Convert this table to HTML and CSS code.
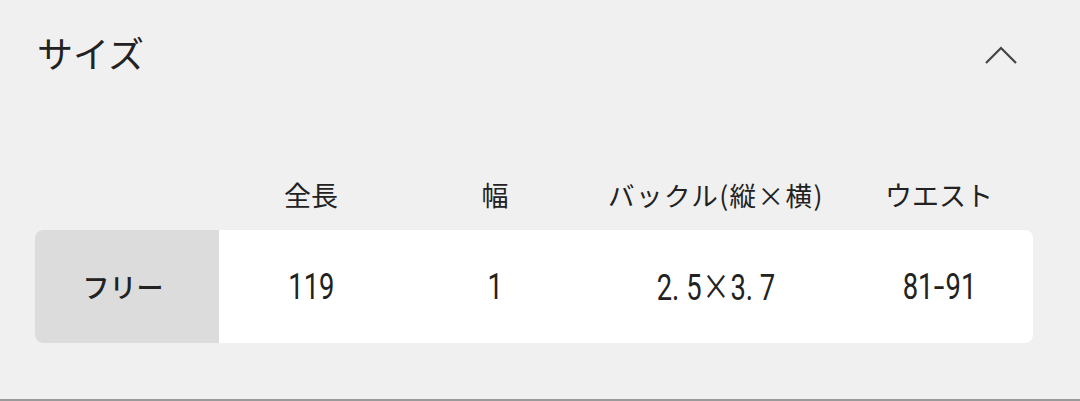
FILE: index.html
```html
<!DOCTYPE html>
<html lang="ja">
<head>
<meta charset="utf-8">
<link rel="stylesheet" href="styles.css">
</head>
<body>
<section class="panel">
  <header class="head">
    <h2 class="title">サイズ</h2>
    <svg class="chev" width="34" height="20" viewBox="0 0 34 20"><polyline points="2,18 17,3 32,18" fill="none" stroke="#444" stroke-width="2.2"/></svg>
  </header>
  <div class="table">
    <div class="row hrow">
      <div class="lab"></div>
      <div class="c">全長</div>
      <div class="c">幅</div>
      <div class="c wide">バックル(縦×横)</div>
      <div class="c">ウエスト</div>
    </div>
    <div class="row drow">
      <div class="lab">フリー</div>
      <div class="c"><span class="num">119</span></div>
      <div class="c"><span class="num">1</span></div>
      <div class="c"><span class="num">2.<span class="sp"> </span>5<span class="x">×</span>3.<span class="sp"> </span>7</span></div>
      <div class="c"><span class="num">81<span class="dash">-</span>91</span></div>
    </div>
  </div>
</section>
<div class="rule"></div>
</body>
</html>
```

FILE: styles.css
```css
html, body { margin: 0; padding: 0; }
body {
  width: 1080px;
  height: 401px;
  background: #f0f0f0;
  font-family: "Noto Sans CJK JP", "Noto Sans", sans-serif;
  color: #222;
  display: flex;
  flex-direction: column;
  overflow: hidden;
}
.panel { flex: 1; padding: 0 0 0 35px; }
.head {
  height: 108px;
  width: 983px;
  display: flex;
  align-items: center;
  justify-content: space-between;
}
.title {
  margin: 0 0 0 2px;
  font-size: 36px;
  font-weight: 400;
  line-height: 1;
  position: relative;
  top: -2px;
}
.chev { position: relative; top: 1px; }
.table { display: flex; flex-direction: column; }
.row {
  display: grid;
  grid-template-columns: 184px 184px 184px 258px 188px;
  width: 998px;
}
.hrow { height: 122px; align-items: center; font-size: 27px; }
.hrow .c { text-align: center; padding-top: 50px; }
.hrow .wide { letter-spacing: 1.5px; font-size: 26.5px; }
.drow {
  height: 113px;
  background: #fff;
  border-radius: 8px;
  overflow: hidden;
  align-items: stretch;
}
.drow .lab {
  background: #dcdcdc;
  display: flex;
  align-items: center;
  justify-content: center;
  font-size: 27px;
  font-weight: 500;
  padding-right: 8px;
}
.drow .c {
  display: flex;
  align-items: center;
  justify-content: center;
}
.num {
  font-family: "Roboto", "Noto Sans", sans-serif;
  font-size: 36px;
  line-height: 40px;
  display: inline-block;
  transform: scaleX(0.76);
  white-space: pre;
}
.num .sp { display: inline-block; width: 9px; }
.num .x { font-family: "Noto Sans CJK JP", sans-serif; font-size: 36px; line-height: 1; padding: 0 1px; }
.num .dash { display: inline-block; padding: 0 3px; transform: scaleX(1.4); }
.rule { height: 2px; background: #9a9a9a; }
```
